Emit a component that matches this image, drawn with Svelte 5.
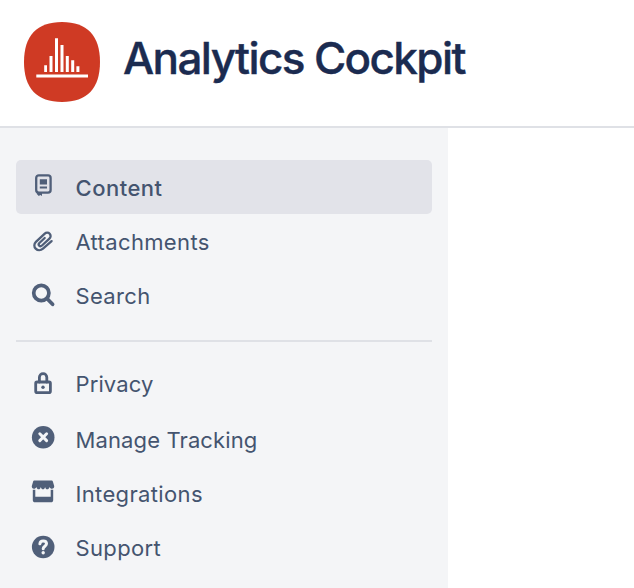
<script lang="ts">
  type Item = { id: string; label: string };

  const groups: Item[][] = [
    [
      { id: 'content', label: 'Content' },
      { id: 'attachments', label: 'Attachments' },
      { id: 'search', label: 'Search' },
    ],
    [
      { id: 'privacy', label: 'Privacy' },
      { id: 'tracking', label: 'Manage Tracking' },
      { id: 'integrations', label: 'Integrations' },
      { id: 'support', label: 'Support' },
    ],
  ];

  let active = $state('content');
</script>

{#snippet icon(id: string)}
  <svg class="icon {id}" viewBox="0 0 24 24" aria-hidden="true">
    {#if id === 'content'}
      <rect class="line" x="5.2" y="2.3" width="14.4" height="17.4" rx="2.6" />
      <path d="M8.8 6.3H16v5.2H8.8zM8.8 13.6H16v2H8.8zM5.8 19H11v3.900l-1.700-1-1.500 1-2-2z" />
    {:else if id === 'attachments'}
      <path class="line" d="M20.600 12.100 12 19.600c-2.200 2-5.400 2-7.300 0s-1.800-4.900.2-6.800l8.600-8c1.600-1.500 3.900-1.500 5.200-.1s1.200 3.600-.3 5l-7.400 6.800c-.9.8-2.100.8-2.800.1s-.6-1.800.2-2.600l5.300-5" />
    {:else if id === 'search'}
      <circle class="line heavy" cx="10.300" cy="10" r="7.600" />
      <path class="line heavy" d="m16.200 15.700 5.400 5.600" />
    {:else if id === 'privacy'}
      <path class="line bold" d="M8.400 11V6.300a3.700 3.700 0 0 1 7.400 0V11" />
      <rect class="line bold" x="4.700" y="11" width="14.700" height="10.700" rx="1.400" />
      <circle cx="12" cy="16.300" r="1.700" />
    {:else if id === 'tracking'}
      <circle cx="12.200" cy="12.200" r="11.300" />
      <path class="cutout" d="m8.800 8.800 6.800 6.800m0-6.800-6.800 6.800" />
    {:else if id === 'integrations'}
      <path d="M3.700.6h16.600c.9 0 1.500.5 1.700 1.300l1.200 4.200c.3 1.500-.9 2.700-2.200 2.700-1.200 0-2-.9-2.500-1.900-.4 1.400-1.200 2.400-2.300 2.400-1 0-1.800-1-2.100-2.400-.3 1.400-1.100 2.400-2.100 2.400s-1.800-1-2.200-2.400c-.4 1.400-1.100 2.400-2.100 2.400-1.100 0-1.900-1-2.300-2.400-.5 1-1.300 1.900-2.500 1.900C1.600 8.800.5 7.600.8 6.100L2 1.900C2.200 1.100 2.800.6 3.700.6z" />
      <path d="M1.800 9.800h2.500v6.900h15.400V9.800h2.500v10.200c0 1.500-.8 2.300-2.300 2.300H4.100c-1.500 0-2.300-.8-2.300-2.300z" />
    {:else}
      <circle cx="12.200" cy="12" r="11.300" />
      <path class="cutout" d="M8.900 8.800c.2-1.800 1.500-2.800 3.300-2.800 2 0 3.300 1.100 3.300 2.800 0 2.300-3.300 2.500-3.300 4.900" />
      <circle class="dot" cx="12.200" cy="17.800" r="1.700" />
    {/if}
  </svg>
{/snippet}

<header>
  <svg class="logo" viewBox="0 0 76 80" aria-hidden="true">
    <path class="badge" d="M38 0C63 0 76 13.500 76 40S63 80 38 80 0 66.500 0 40 13 0 38 0z" />
    <path
      class="bars"
      d="M20.200 43.200h2.800v6.800h-2.800zM25.500 34h3v16h-3zM31 16.300h3V50h-3zM36.500 23h3v27h-3zM41.800 34h3v16h-3zM47.200 38.300h3V50h-3zM52.400 44.300h3V50h-3zM12.300 52.600h51.700v3H12.300z"
    />
  </svg>
  <h1>Analytics Cockpit</h1>
</header>

<nav>
  {#each groups as group}
    <ul>
      {#each group as item}
        <li>
          <button class:active={active === item.id} onclick={() => (active = item.id)}>
            {@render icon(item.id)}
            <span class={item.id}>{item.label}</span>
          </button>
        </li>
      {/each}
    </ul>
  {/each}
</nav>

<style>
  :global(body) {
    margin: 0;
    background: #fff;
    font-family: Inter, 'Liberation Sans', sans-serif;
  }

  header {
    display: flex;
    align-items: center;
    gap: 23px;
    box-sizing: border-box;
    height: 128px;
    padding: 0 24px 2px;
    border-bottom: 2px solid #dfe1e6;
  }

  .logo {
    width: 76px;
    height: 80px;
  }

  .badge {
    fill: #cf3a24;
  }

  .bars {
    fill: #fff;
  }

  h1 {
    margin: 0;
    padding-bottom: 8px;
    color: #1b2b50;
    font-size: 44px;
    font-weight: 500;
    line-height: 56px;
    letter-spacing: -1.6px;
    white-space: nowrap;
    -webkit-text-stroke: 0.4px #1b2b50;
  }

  nav {
    box-sizing: border-box;
    width: 448px;
    height: 460px;
    padding: 32px 16px 0;
    background: #f4f5f7;
  }

  ul {
    margin: 0;
    padding: 0;
    list-style: none;
  }

  ul + ul {
    margin-top: 18px;
    padding-top: 14px;
    border-top: 2px solid #dfe1e6;
  }

  ul + ul li:first-child {
    margin-bottom: 2px;
  }

  button {
    display: flex;
    align-items: center;
    gap: 20.5px;
    width: 100%;
    height: 54px;
    padding: 0 15px;
    border: 0;
    border-radius: 5px;
    background: none;
    color: #44546f;
    font: inherit;
    font-size: 22px;
    line-height: 28px;
    letter-spacing: 0.35px;
    text-align: left;
    cursor: pointer;
  }

  button.active {
    background: #e2e3e9;
    font-weight: 500;
    letter-spacing: 0.5px;
  }

  span {
    padding-top: 2px;
  }

  span.privacy,
  span.tracking {
    letter-spacing: 0.12px;
  }

  .icon {
    flex: none;
    width: 24px;
    height: 24px;
    overflow: visible;
    fill: #505f79;
  }

  .icon.content,
  .icon.tracking {
    margin-bottom: 4px;
  }

  .icon.integrations {
    margin-bottom: 2px;
  }

  .line {
    fill: none;
    stroke: #505f79;
    stroke-width: 2.3;
    stroke-linecap: round;
    stroke-linejoin: round;
  }

  .line.bold {
    stroke-width: 2.8;
  }

  .line.heavy {
    stroke-width: 3.7;
  }

  .cutout {
    fill: none;
    stroke: #f4f5f7;
    stroke-width: 3;
    stroke-linecap: round;
  }

  .dot {
    fill: #f4f5f7;
  }
</style>
